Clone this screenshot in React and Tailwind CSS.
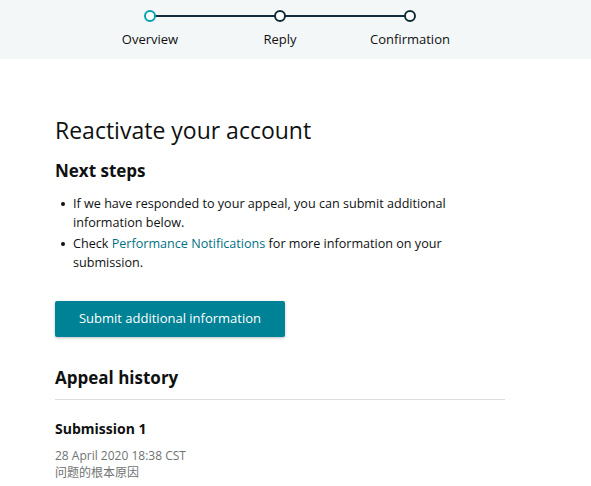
import React from "react";

const steps = [
  { label: "Overview", active: true },
  { label: "Reply", active: false },
  { label: "Confirmation", active: false },
];

const Stepper = () => (
  <div className="h-[59px] bg-[#f4f7f7]">
    <div className="relative ml-[85px] flex w-[390px] pt-[10px]">
      <div className="absolute left-[65px] right-[65px] top-[15px] h-[2px] bg-[#0f2d37]" />
      {steps.map((s) => (
        <div key={s.label} className="relative flex w-[130px] flex-col items-center">
          <div
            className={
              s.active
                ? "h-[12px] w-[12px] rounded-full border-2 border-[#00a1b3] bg-white"
                : "h-[12px] w-[12px] rounded-full border-2 border-[#0f2d37] bg-white"
            }
          />
          <span className="mt-[9px] text-[13px] leading-[16px] text-[#0f1111]">{s.label}</span>
        </div>
      ))}
    </div>
  </div>
);

const Bullet = ({ children }) => (
  <li className="mb-[2px] flex">
    <span className="flex h-[19px] w-[18px] shrink-0 items-center pl-[6px]">
      <span className="h-[4px] w-[4px] rounded-full bg-[#0f1111]" />
    </span>
    <span>{children}</span>
  </li>
);

export default function App() {
  return (
    <div
      className="min-h-[486px] bg-white text-[#0f1111]"
      style={{ fontFamily: '"Open Sans", "Noto Sans CJK SC", sans-serif' }}
    >
      <Stepper />
      <div className="w-[450px] pl-[55px] box-content">
        <h1 className="mt-[56px] text-[23px] leading-[30px] font-normal text-[#0f1111]">
          Reactivate your account
        </h1>
        <h2 className="mt-[14px] text-[17px] leading-[24px] font-bold">Next steps</h2>
        <ul className="mt-[11px] pr-[40px] text-[12.6px] leading-[19px]">
          <Bullet>If we have responded to your appeal, you can submit additional information below.</Bullet>
          <Bullet>
            Check <span className="text-[#007185]">Performance Notifications</span> for more information on your
            submission.
          </Bullet>
        </ul>
        <button className="mt-[27px] h-[36px] w-[230px] rounded-[2px] bg-[#008296] text-[13px] text-white shadow-[0_1px_3px_rgba(0,0,0,0.25)]">
          Submit additional information
        </button>
        <h2 className="mt-[29px] text-[17px] leading-[24px] font-bold">Appeal history</h2>
        <div className="mt-[9px] h-px bg-[#dddddd]" />
        <h3 className="mt-[19px] text-[14px] leading-[20px] font-bold">Submission 1</h3>
        <div className="mt-[8px] text-[12px] leading-[17px] text-[#6f7373]">28 April 2020 18:38 CST</div>
        <div className="text-[12px] leading-[17px] text-[#6f7373]">问题的根本原因</div>
      </div>
    </div>
  );
}
